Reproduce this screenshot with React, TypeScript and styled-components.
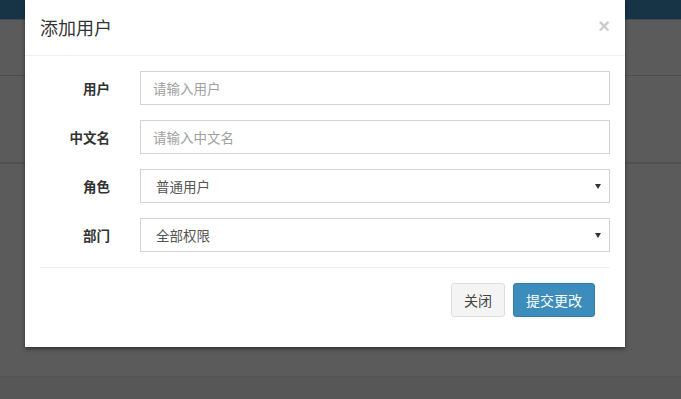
import React from "react";
import styled, { createGlobalStyle } from "styled-components";

const GlobalStyle = createGlobalStyle`
  html, body {
    margin: 0;
    padding: 0;
  }
  body {
    font-family: "Liberation Sans", "Noto Sans CJK SC", sans-serif;
    font-size: 14px;
    color: #333;
    overflow: hidden;
  }
  * {
    box-sizing: border-box;
  }
`;

// Dimmed admin page behind the modal
const Page = styled.div`
  position: relative;
  width: 681px;
  height: 399px;
  background: #5b5b5b;
  display: flex;
  flex-direction: column;
`;

const TopBar = styled.div`
  flex-shrink: 0;
  height: 20px;
  background: #173447;
  border-bottom: 1px solid #3d4d58;
`;

const PageBand = styled.div<{ $height: number; $line?: string }>`
  flex-shrink: 0;
  height: ${(p) => p.$height}px;
  border-bottom: ${(p) => p.$line || "none"};
`;

const PageFooter = styled.div`
  flex: 1;
  background: #575757;
  border-top: 1px solid #545454;
`;

// Modal
const Modal = styled.div`
  position: absolute;
  top: 0;
  left: 25px;
  width: 600px;
  background: #fff;
  box-shadow: 0 2px 4px rgba(0, 0, 0, 0.45);
`;

const Header = styled.div`
  display: flex;
  align-items: center;
  justify-content: space-between;
  padding: 15px;
  border-bottom: 1px solid #f0f0f0;
`;

const Title = styled.h4`
  margin: 0;
  font-family: "Noto Sans CJK SC", sans-serif;
  font-size: 18px;
  font-weight: 400;
  line-height: 25px;
  color: #333;
`;

const Close = styled.button`
  border: 0;
  background: none;
  padding: 0;
  margin-top: -4px;
  font-family: "Liberation Sans", sans-serif;
  font-size: 20px;
  font-weight: 700;
  line-height: 1;
  color: #000;
  opacity: 0.2;
  cursor: pointer;
`;

const Body = styled.div`
  padding: 15px;
`;

const FormGroup = styled.div`
  display: flex;
  align-items: center;
  gap: 30px;
  margin-bottom: 15px;
`;

const Label = styled.label`
  width: 70px;
  text-align: right;
  font-family: "Noto Sans CJK SC", sans-serif;
  font-size: 13.5px;
  font-weight: 700;
  color: #333;
`;

const Input = styled.input`
  flex: 1;
  height: 34px;
  padding: 6px 12px;
  border: 1px solid #d4d4d4;
  border-radius: 0;
  font-family: "Noto Sans CJK SC", sans-serif;
  font-size: 13.5px;
  color: #555;
  outline: none;
  &::placeholder {
    color: #a0a0a0;
  }
`;

const SelectWrap = styled.div`
  position: relative;
  flex: 1;
  display: flex;
`;

const Select = styled.select`
  flex: 1;
  height: 34px;
  padding: 6px 12px 6px 15px;
  border: 1px solid #d4d4d4;
  border-radius: 0;
  background: #fff;
  appearance: none;
  font-family: "Noto Sans CJK SC", sans-serif;
  font-size: 13.5px;
  color: #555;
  outline: none;
`;

const Caret = styled.span`
  position: absolute;
  right: 9px;
  top: 15px;
  width: 0;
  height: 0;
  border-left: 3px solid transparent;
  border-right: 3px solid transparent;
  border-top: 5px solid #333;
  pointer-events: none;
`;

const Footer = styled.div`
  display: flex;
  justify-content: flex-end;
  gap: 8px;
  padding: 15px;
  border-top: 1px solid #f0f0f0;
`;

const Button = styled.button<{ $primary?: boolean }>`
  height: 34px;
  padding: 6px 12px;
  border-radius: 3px;
  border: 1px solid ${(p) => (p.$primary ? "#367fa9" : "#ddd")};
  background: ${(p) => (p.$primary ? "#3c8dbc" : "#f4f4f4")};
  color: ${(p) => (p.$primary ? "#fff" : "#444")};
  font-family: "Noto Sans CJK SC", sans-serif;
  font-size: 14px;
  line-height: 20px;
  cursor: pointer;
`;

export default function App() {
  return (
    <>
      <GlobalStyle />
      <Page>
        <TopBar />
        <PageBand $height={56} $line="1px solid #4e4e4e" />
        <PageBand $height={88} $line="2px solid #505050" />
        <PageBand $height={212} />
        <PageFooter />

        <Modal>
          <Header>
            <Title>添加用户</Title>
            <Close aria-label="Close">×</Close>
          </Header>
          <Body>
            <FormGroup>
              <Label>用户</Label>
              <Input type="text" placeholder="请输入用户" />
            </FormGroup>
            <FormGroup>
              <Label>中文名</Label>
              <Input type="text" placeholder="请输入中文名" />
            </FormGroup>
            <FormGroup>
              <Label>角色</Label>
              <SelectWrap>
                <Select defaultValue="user">
                  <option value="user">普通用户</option>
                  <option value="admin">管理员</option>
                </Select>
                <Caret />
              </SelectWrap>
            </FormGroup>
            <FormGroup>
              <Label>部门</Label>
              <SelectWrap>
                <Select defaultValue="all">
                  <option value="all">全部权限</option>
                </Select>
                <Caret />
              </SelectWrap>
            </FormGroup>
            <Footer>
              <Button>关闭</Button>
              <Button $primary>提交更改</Button>
            </Footer>
          </Body>
        </Modal>
      </Page>
    </>
  );
}
